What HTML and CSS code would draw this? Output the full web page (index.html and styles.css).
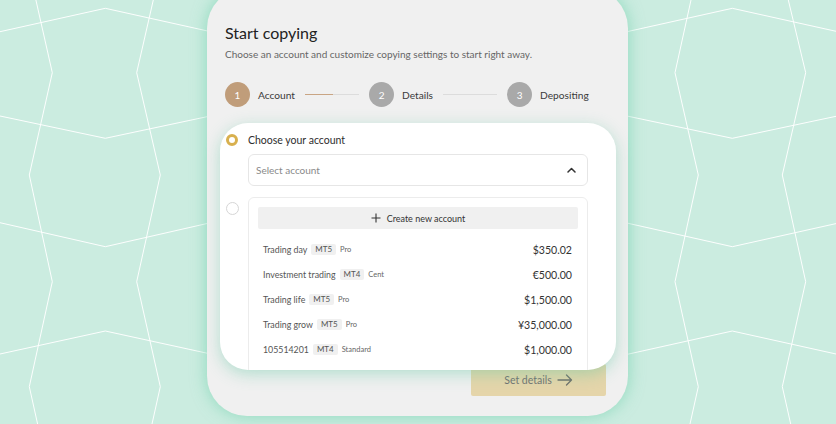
FILE: index.html
```html
<!DOCTYPE html>
<html lang="en">
<head>
<meta charset="utf-8">
<title>Start copying</title>
<link rel="stylesheet" href="styles.css">
</head>
<body>
<div class="stage">
  <svg class="pattern" width="836" height="424" viewBox="0 0 836 424" aria-hidden="true">
    <g fill="none" stroke="#ffffff" stroke-width="1" stroke-opacity="0.95">
      <polyline points="35.9,0 52.3,72.7 29.3,175 52.3,281.7 29.3,386.7 37.6,424"/>
      <polyline points="153.3,0 136.7,72.7 160.3,175 136.7,281.7 160.3,386.7 152,424"/>
      <polyline points="691,0 675,72.7 698.3,175 675,281.7 698.3,386.7 690,424"/>
      <polyline points="788.3,0 805.7,72.7 782.3,175 805.7,281.7 782.3,386.7 790.7,424"/>
      <polyline points="0,31.7 105.3,8.3 240,38.2"/>
      <polyline points="0,116 105.3,138.3 240,109.7"/>
      <polyline points="0,222.7 105.3,246.7 240,216"/>
      <polyline points="0,354 105.3,331 240,360.4"/>
      <polyline points="600,37.7 732.3,8.3 836,31.3"/>
      <polyline points="600,110.3 732.3,138.3 836,116.3"/>
      <polyline points="600,217 732.3,246.7 836,223.6"/>
      <polyline points="600,360.4 732.3,331 836,354"/>
    </g>
  </svg>

  <main class="card">
    <h1 class="title">Start copying</h1>
    <p class="subtitle">Choose an account and customize copying settings to start right away.</p>

    <ol class="steps">
      <li class="step step-active"><span class="step-num">1</span><span class="step-label">Account</span></li>
      <li class="step-line"><span class="step-line-fill"></span></li>
      <li class="step"><span class="step-num">2</span><span class="step-label">Details</span></li>
      <li class="step-line"></li>
      <li class="step"><span class="step-num">3</span><span class="step-label">Depositing</span></li>
    </ol>

    <section class="panel">
      <span class="radio radio-on"></span>
      <span class="option-label">Choose your account</span>

      <span class="spacer"></span>
      <div class="select">
        <span class="select-placeholder">Select account</span>
        <svg class="chevron" width="9" height="6" viewBox="0 0 9 6"><path d="M1 5 L4.5 1.5 L8 5" fill="none" stroke="#333" stroke-width="1.5" stroke-linecap="round" stroke-linejoin="round"/></svg>
      </div>

      <span class="radio radio-off"></span>
      <div class="list">
        <button class="create-btn" type="button">
          <svg width="10" height="10" viewBox="0 0 10 10"><path d="M5 0.5 V9.5 M0.5 5 H9.5" stroke="#333" stroke-width="1.1"/></svg>
          <span>Create new account</span>
        </button>
        <ul class="rows">
          <li class="row"><span class="name">Trading day</span><span class="badge">MT5</span><span class="type">Pro</span><span class="amount">$350.02</span></li>
          <li class="row"><span class="name">Investment trading</span><span class="badge">MT4</span><span class="type">Cent</span><span class="amount">€500.00</span></li>
          <li class="row"><span class="name">Trading life</span><span class="badge">MT5</span><span class="type">Pro</span><span class="amount">$1,500.00</span></li>
          <li class="row"><span class="name">Trading grow</span><span class="badge">MT5</span><span class="type">Pro</span><span class="amount">¥35,000.00</span></li>
          <li class="row"><span class="name">105514201</span><span class="badge">MT4</span><span class="type">Standard</span><span class="amount">$1,000.00</span></li>
        </ul>
      </div>
    </section>

    <button class="next-btn" type="button">
      <span>Set details</span>
      <svg width="16" height="12" viewBox="0 0 16 12"><path d="M1 6 H14.5 M9.5 1 L14.5 6 L9.5 11" fill="none" stroke="#6f6f6a" stroke-width="1.3" stroke-linecap="round" stroke-linejoin="round"/></svg>
    </button>
  </main>
</div>
</body>
</html>
```

FILE: styles.css
```css
* { box-sizing: border-box; }

html, body {
  margin: 0;
  padding: 0;
}

body {
  width: 836px;
  height: 424px;
  overflow: hidden;
  background: #cbece0;
  font-family: "Lato", "Noto Sans", sans-serif;
  color: #333;
}

.stage {
  display: grid;
  width: 836px;
  height: 424px;
  overflow: hidden;
}

.pattern {
  grid-area: 1 / 1;
  display: block;
}

.card {
  grid-area: 1 / 1;
  justify-self: center;
  align-self: start;
  width: 421px;
  height: 428px;
  margin-top: -12px;
  margin-left: -1px;
  padding: 35px 18px 20px 18px;
  background: #f0f0f0;
  border-radius: 40px;
  box-shadow: 0 0 16px rgba(100, 205, 165, 0.6);
  display: flex;
  flex-direction: column;
}

.title {
  margin: 0;
  font-size: 16px;
  line-height: 20px;
  font-weight: 400;
  color: #222;
}

.subtitle {
  margin: 4px 0 0 0;
  font-size: 10px;
  line-height: 14px;
  color: #666;
}

.steps {
  list-style: none;
  margin: 21px 0 0 0;
  padding: 0;
  display: flex;
  align-items: center;
  height: 25px;
}

.step {
  display: flex;
  align-items: center;
  gap: 8px;
}

.step-num {
  width: 25px;
  height: 25px;
  border-radius: 50%;
  background: #a9a9a9;
  color: #fff;
  font-size: 10px;
  display: flex;
  align-items: center;
  justify-content: center;
}

.step-active .step-num {
  background: #c09d7a;
}

.step-label {
  font-size: 10.2px;
  color: #3a3a3a;
}

.step-line {
  width: 54px;
  height: 1.5px;
  background: #dcdcdc;
  margin: 0 10px;
  display: flex;
}

.step-line-fill {
  width: 28px;
  background: #c9a584;
}

.panel {
  position: relative;
  z-index: 1;
  margin: 16px -6px 0 -5px;
  height: 247px;
  flex: none;
  background: #fff;
  border-radius: 28px;
  box-shadow: 0 4px 16px rgba(100, 200, 165, 0.45);
  overflow: hidden;
  padding: 10px 0 0 6px;
  display: grid;
  grid-template-columns: 12px 340px;
  column-gap: 10px;
  align-content: start;
}

.radio {
  width: 12px;
  height: 12px;
  border-radius: 50%;
  align-self: center;
}

.radio-on {
  background: #fff;
  border: 3.5px solid #d8b04e;
}

.radio-off {
  width: 13px;
  height: 13px;
  border: 1px solid #d6d6d6;
  align-self: start;
  margin-top: 16px;
}

.option-label {
  font-size: 10.5px;
  line-height: 14px;
  color: #2e2e2e;
}

.spacer { display: block; }

.select {
  margin-top: 7px;
  height: 32px;
  border: 1px solid #e6e6e6;
  border-radius: 6px;
  display: flex;
  align-items: center;
  justify-content: space-between;
  padding: 0 11px 0 7px;
}

.select-placeholder {
  font-size: 10px;
  color: #8a8a8a;
}

.chevron { display: block; }

.list {
  margin-top: 11px;
  border: 1px solid #ececec;
  border-radius: 6px;
  padding: 9px 9px 12px 9px;
}

.create-btn {
  width: 100%;
  height: 22px;
  border: 0;
  border-radius: 2px;
  background: #f0f0f0;
  font-family: inherit;
  font-size: 9px;
  color: #333;
  display: flex;
  align-items: center;
  justify-content: center;
  gap: 6px;
  padding: 0;
}

.create-btn svg { display: block; }

.rows {
  list-style: none;
  margin: 8px 0 0 0;
  padding: 0;
}

.row {
  height: 25px;
  display: flex;
  align-items: center;
  padding: 0 6px 0 5px;
}

.name {
  font-size: 8.8px;
  color: #555;
}

.badge {
  margin-left: 4px;
  padding: 0 4px;
  height: 11px;
  line-height: 11px;
  font-size: 8px;
  color: #555;
  background: #f0f0f0;
  border-radius: 2px;
}

.type {
  margin-left: 4px;
  font-size: 7.5px;
  color: #666;
}

.amount {
  margin-left: auto;
  font-size: 10.6px;
  color: #333;
}

.next-btn {
  align-self: flex-end;
  margin: -6px 4px 0 0;
  width: 135px;
  height: 32px;
  border: 0;
  border-radius: 2px;
  background: #e5d5aa;
  font-family: inherit;
  font-size: 10.5px;
  color: #707070;
  display: flex;
  align-items: center;
  justify-content: center;
  gap: 5px;
  padding: 0;
}

.next-btn svg { display: block; }
```
